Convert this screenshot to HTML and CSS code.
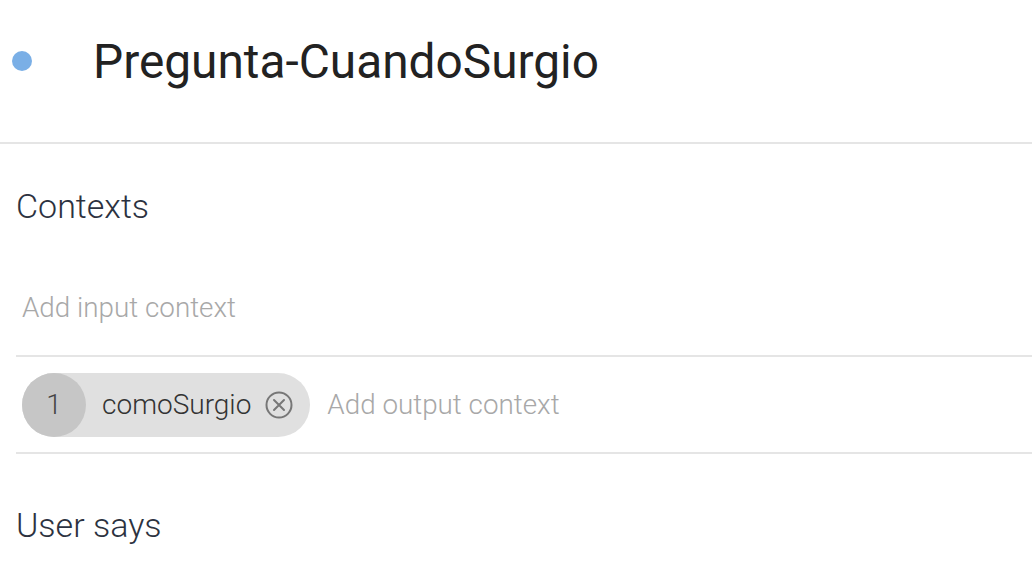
FILE: index.html
```html
<!DOCTYPE html>
<html>
<head>
<meta charset="utf-8">
<link rel="stylesheet" href="styles.css">
</head>
<body>
<header class="header">
  <span class="dot"></span>
  <h1 class="title">Pregunta-CuandoSurgio</h1>
</header>
<section class="section">
  <h2 class="section-title">Contexts</h2>
  <div class="field input-field">
    <span class="placeholder">Add input context</span>
  </div>
  <div class="field output-field">
    <span class="chip">
      <span class="chip-num">1</span>
      <span class="chip-label">comoSurgio</span>
      <svg class="chip-x" width="28" height="28" viewBox="0 0 28 28">
        <circle cx="14" cy="14" r="12.5" fill="none" stroke="#777" stroke-width="2"/>
        <path d="M9 9 L19 19 M19 9 L9 19" stroke="#777" stroke-width="2" stroke-linecap="round"/>
      </svg>
    </span>
    <span class="placeholder">Add output context</span>
  </div>
  <h2 class="section-title user-says">User says</h2>
</section>
</body>
</html>
```
FILE: styles.css
```css
html, body {
  margin: 0;
  padding: 0;
  background: #fff;
}
body {
  font-family: Roboto, "Noto Sans", sans-serif;
  width: 1032px;
  height: 574px;
  overflow: hidden;
}
.header {
  display: flex;
  align-items: center;
  height: 142px;
  border-bottom: 2px solid #e5e5e5;
}
.dot {
  width: 20px;
  height: 20px;
  border-radius: 50%;
  background: #7aafe6;
  margin-left: 12px;
  margin-top: -20px;
}
.title {
  margin: -18px 0 0 61px;
  font-size: 47.8px;
  font-weight: 400;
  color: #222;
}
.section {
  padding-left: 16px;
}
.section-title {
  margin: 0;
  font-weight: 300;
  font-size: 34px;
  color: #2c3240;
  line-height: 40px;
}
.section > .section-title:first-child {
  margin-top: 42px;
}
.field {
  display: flex;
  align-items: center;
  border-bottom: 2px solid #e5e5e5;
}
.input-field {
  padding: 64px 0 29px;
}
.output-field {
  height: 95px;
}
.placeholder {
  font-size: 27.8px;
  line-height: 36px;
  font-weight: 300;
  color: #a8a8a8;
  padding-left: 6px;
}
.chip {
  display: flex;
  align-items: center;
  height: 64px;
  border-radius: 32px;
  background: #e0e0e0;
  margin-left: 6px;
  padding-right: 17px;
  margin-right: 17px;
}
.chip-num {
  width: 64px;
  height: 64px;
  border-radius: 50%;
  background: #c6c6c6;
  display: flex;
  align-items: center;
  justify-content: center;
  font-size: 28px;
  font-weight: 300;
  color: #444;
}
.chip-label {
  font-size: 28px;
  font-weight: 300;
  color: #333;
  margin-left: 16px;
  margin-right: 14px;
}
.chip-x {
  display: block;
}
.chip + .placeholder {
  padding-left: 0;
}
.user-says {
  margin-top: 51px;
}
```
